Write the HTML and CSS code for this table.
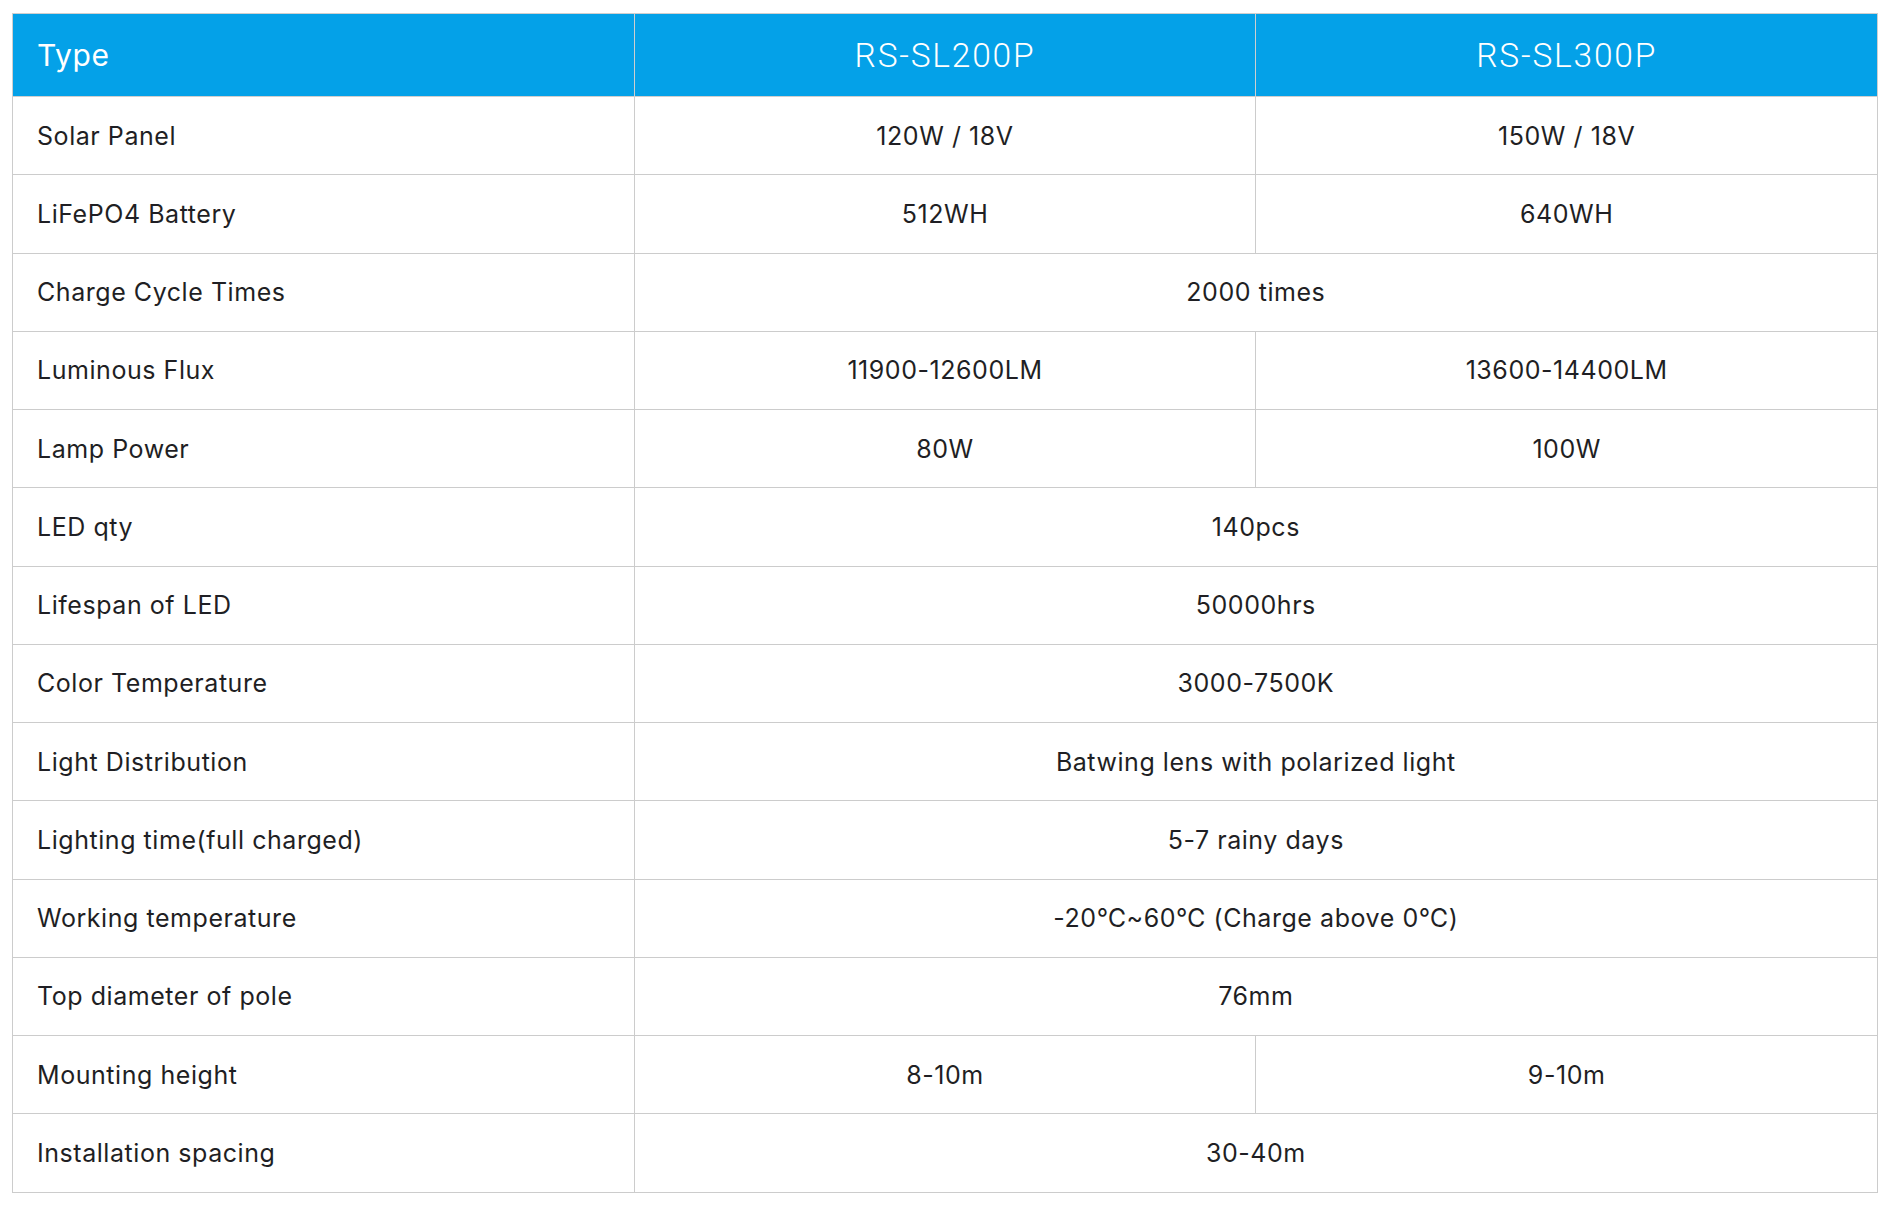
FILE: index.html
```html
<!DOCTYPE html>
<html>
<head>
<meta charset="utf-8">
<link rel="stylesheet" href="styles.css">
</head>
<body>
<table class="spec">
  <thead>
    <tr>
      <th class="label-head">Type</th>
      <th class="model">RS-SL200P</th>
      <th class="model">RS-SL300P</th>
    </tr>
  </thead>
  <tbody>
    <tr><td class="label">Solar Panel</td><td>120W / 18V</td><td>150W / 18V</td></tr>
    <tr><td class="label">LiFePO4 Battery</td><td>512WH</td><td>640WH</td></tr>
    <tr><td class="label">Charge Cycle Times</td><td colspan="2">2000 times</td></tr>
    <tr><td class="label">Luminous Flux</td><td>11900-12600LM</td><td>13600-14400LM</td></tr>
    <tr><td class="label">Lamp Power</td><td>80W</td><td>100W</td></tr>
    <tr><td class="label">LED qty</td><td colspan="2">140pcs</td></tr>
    <tr><td class="label">Lifespan of LED</td><td colspan="2">50000hrs</td></tr>
    <tr><td class="label">Color Temperature</td><td colspan="2">3000-7500K</td></tr>
    <tr><td class="label">Light Distribution</td><td colspan="2">Batwing lens with polarized light</td></tr>
    <tr><td class="label">Lighting time(full charged)</td><td colspan="2">5-7 rainy days</td></tr>
    <tr><td class="label">Working temperature</td><td colspan="2">-20℃~60℃ (Charge above 0℃)</td></tr>
    <tr><td class="label">Top diameter of pole</td><td colspan="2">76mm</td></tr>
    <tr><td class="label">Mounting height</td><td>8-10m</td><td>9-10m</td></tr>
    <tr><td class="label">Installation spacing</td><td colspan="2">30-40m</td></tr>
  </tbody>
</table>
</body>
</html>
```
FILE: styles.css
```css
html, body {
  margin: 0;
  padding: 0;
  background: #ffffff;
}
body {
  padding: 13px 5px 0 12px;
  font-family: Inter, "Noto Sans", sans-serif;
  color: #1f1f24;
}
.spec {
  width: 1866px;
  border-collapse: collapse;
  table-layout: fixed;
}
.spec th,
.spec td {
  border: 1px solid #cccccc;
  padding: 0 24px;
  text-align: center;
  vertical-align: middle;
}
.spec thead th {
  background: #04a1e8;
  color: #ffffff;
  height: 82px;
  border-color: #cfcfcf;
  font-weight: 400;
}
.spec .label-head {
  text-align: left;
  font-family: Inter, sans-serif;
  font-size: 30px;
  letter-spacing: 0.6px;
}
.spec .model {
  font-family: Roboto, "Liberation Sans", sans-serif;
  font-size: 33.5px;
  font-weight: 300;
  letter-spacing: 1.8px;
}
.spec tbody tr {
  height: 78.25px;
}
.spec tbody td {
  font-size: 25px;
  letter-spacing: 0.55px;
}
.spec td.label {
  text-align: left;
}
```
